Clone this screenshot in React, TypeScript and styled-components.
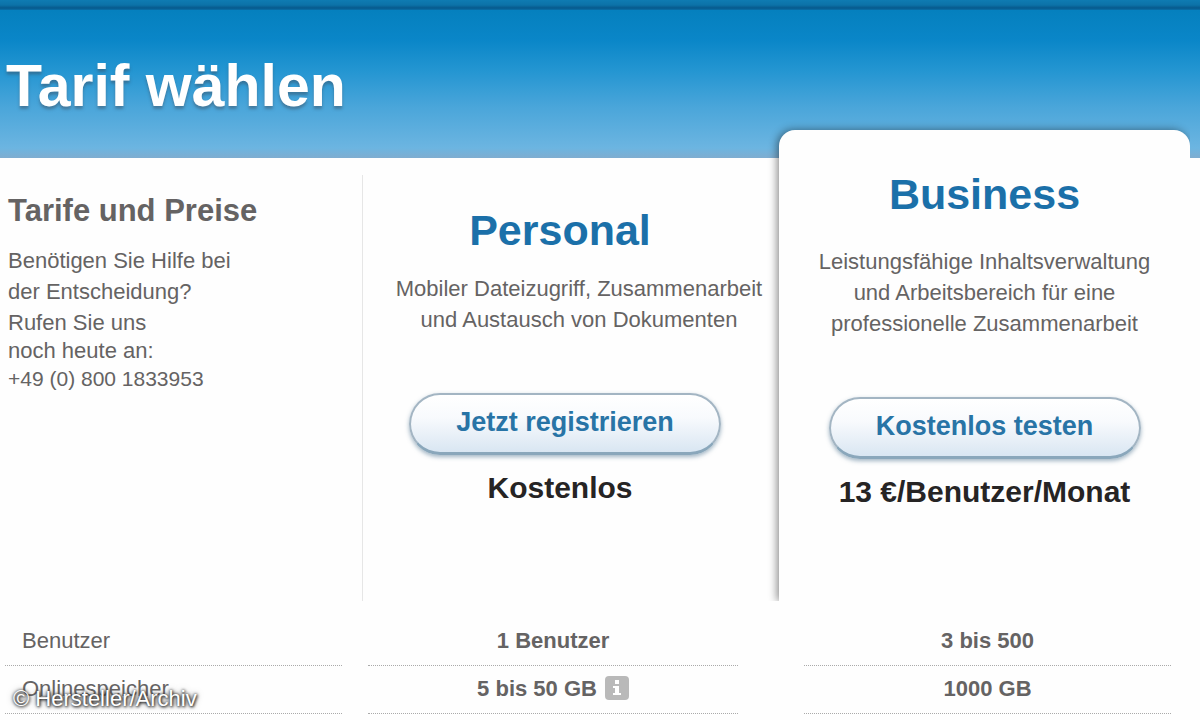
import React from "react";
import styled, { createGlobalStyle } from "styled-components";

const GlobalStyle = createGlobalStyle`
  * { box-sizing: border-box; }
  body {
    margin: 0;
    background: #fefefe;
    color: #656363;
    font: 22px/31px "Liberation Sans", Arial, sans-serif;
  }
  h1, h2, p { margin: 0; }
`;

const Page = styled.div`
  position: relative;
  min-height: 100vh;
`;

const TopStrip = styled.div`
  height: 10px;
  background: linear-gradient(#0f7bb2 0, #0c72a8 5px, #07598c 8px, #0a6fa8 10px);
`;

const Header = styled.header`
  height: 148px;
  padding: 41px 6px 0;
  background: linear-gradient(#0580be 0, #0a86c8 30px, #2596d2 62px, #4ba6da 98px, #6cb5e1 138px, #7fadd0 148px);
`;

const PageTitle = styled.h1`
  color: #fff;
  font-size: 59px;
  line-height: 70px;
  text-shadow: 0 3px 3px rgba(60, 80, 100, 0.5);
`;

const Plans = styled.main`
  display: grid;
  grid-template-columns: 363fr 416fr 421fr;
  height: 443px;
`;

const Help = styled.section`
  margin-top: 17px;
  padding: 18px 8px 0;
  border-right: 1px solid #e6e6e6;
`;

const HelpTitle = styled.h2`
  margin-bottom: 16px;
  font-size: 31px;
  line-height: 36px;
`;

const CallNote = styled.p`
  line-height: 26px;
`;

const Phone = styled.p`
  font-size: 21px;
  line-height: 30px;
`;

const Plan = styled.section`
  padding-top: 45px;
  text-align: center;
`;

const Featured = styled(Plan)`
  position: relative;
  margin: -28px 10px 0 0;
  padding-top: 37px;
  border-radius: 16px 16px 0 0;
  background: #fefefe;
  box-shadow: -2px 0 8px rgba(0, 0, 0, 0.45);
  clip-path: inset(-12px 0 0 -12px);
`;

const PlanName = styled.h2<{ $shift?: number }>`
  padding-right: ${(p) => p.$shift ?? 0}px;
  color: #1b70a9;
  font-size: 43px;
  line-height: 54px;
`;

const Description = styled.p<{ $top: number; $shift?: number }>`
  margin-top: ${(p) => p.$top}px;
  padding-left: ${(p) => p.$shift ?? 0}px;
  white-space: nowrap;
`;

const Action = styled.div<{ $shift?: number }>`
  display: flex;
  justify-content: center;
  padding: 58px ${(p) => p.$shift ?? 0}px 0 0;
`;

const PillButton = styled.button`
  width: 312px;
  height: 62px;
  padding: 0 0 3px;
  border: 2px solid #a3b5c3;
  border-bottom: 3px solid #8aa7bb;
  border-radius: 31px;
  background: linear-gradient(#fff 0, #f8fafd 40%, #d9e6f2 100%);
  box-shadow: 0 2px 4px rgba(70, 110, 140, 0.5);
  color: #2874a6;
  font: bold 27px/32px "Liberation Sans", Arial, sans-serif;
  cursor: pointer;
`;

const Price = styled.p<{ $shift?: number }>`
  margin-top: 14px;
  padding-right: ${(p) => p.$shift ?? 0}px;
  color: #262424;
  font-size: 30px;
  font-weight: bold;
  line-height: 38px;
`;

const Features = styled.table`
  width: 100%;
  margin-top: 17px;
  border-collapse: collapse;
  table-layout: fixed;
  color: inherit;
  font: inherit;

  th, td { padding: 0 41px 0 5px; text-align: center; }
  th { width: 30.25%; padding-right: 21px; font-weight: normal; text-align: left; }
  td { font-weight: bold; }
  td:last-child { width: 35.08%; padding: 0 29px 0 25px; }
`;

const Cell = styled.div<{ $indent?: boolean }>`
  display: flex;
  align-items: center;
  justify-content: ${(p) => (p.$indent ? "flex-start" : "center")};
  gap: 8px;
  height: 48px;
  padding: 0 0 3px ${(p) => (p.$indent ? 17 : 0)}px;
  border-bottom: 1px dotted #aaa;
`;

const InfoIcon = () => (
  <svg width="24" height="24" viewBox="0 0 24 24" role="img" aria-label="Info">
    <rect width="24" height="24" rx="4" fill="#b9b9b9" />
    <path d="M10 4h4v4h-4zM8 10h6v7h2v2H8v-2h2v-5H8z" fill="#fff" />
  </svg>
);

const Credit = styled.small`
  position: absolute;
  bottom: 6px;
  left: 13px;
  color: #fff;
  font-size: 22px;
  line-height: 30px;
  text-shadow: 0 0 3px #222, 1px 1px 3px #333, 0 0 6px #777;
`;

export default function App() {
  return (
    <Page>
      <GlobalStyle />
      <TopStrip />
      <Header>
        <PageTitle>Tarif wählen</PageTitle>
      </Header>
      <Plans>
        <Help>
          <HelpTitle>Tarife und Preise</HelpTitle>
          <p>
            Benötigen Sie Hilfe bei
            <br />
            der Entscheidung?
            <br />
            Rufen Sie uns
          </p>
          <CallNote>noch heute an:</CallNote>
          <Phone>+49 (0) 800 1833953</Phone>
        </Help>
        <Plan>
          <PlanName $shift={22}>Personal</PlanName>
          <Description $top={16} $shift={16}>
            Mobiler Dateizugriff, Zusammenarbeit
            <br />
            und Austausch von Dokumenten
          </Description>
          <Action $shift={12}>
            <PillButton type="button">Jetzt registrieren</PillButton>
          </Action>
          <Price $shift={22}>Kostenlos</Price>
        </Plan>
        <Featured>
          <PlanName>Business</PlanName>
          <Description $top={25}>
            Leistungsfähige Inhaltsverwaltung
            <br />
            und Arbeitsbereich für eine
            <br />
            professionelle Zusammenarbeit
          </Description>
          <Action>
            <PillButton type="button">Kostenlos testen</PillButton>
          </Action>
          <Price>13 €/Benutzer/Monat</Price>
        </Featured>
      </Plans>
      <Features>
        <tbody>
          <tr>
            <th scope="row"><Cell $indent>Benutzer</Cell></th>
            <td><Cell>1 Benutzer</Cell></td>
            <td><Cell>3 bis 500</Cell></td>
          </tr>
          <tr>
            <th scope="row"><Cell $indent>Onlinespeicher</Cell></th>
            <td><Cell>5 bis 50 GB <InfoIcon /></Cell></td>
            <td><Cell>1000 GB</Cell></td>
          </tr>
        </tbody>
      </Features>
      <Credit>© Hersteller/Archiv</Credit>
    </Page>
  );
}
